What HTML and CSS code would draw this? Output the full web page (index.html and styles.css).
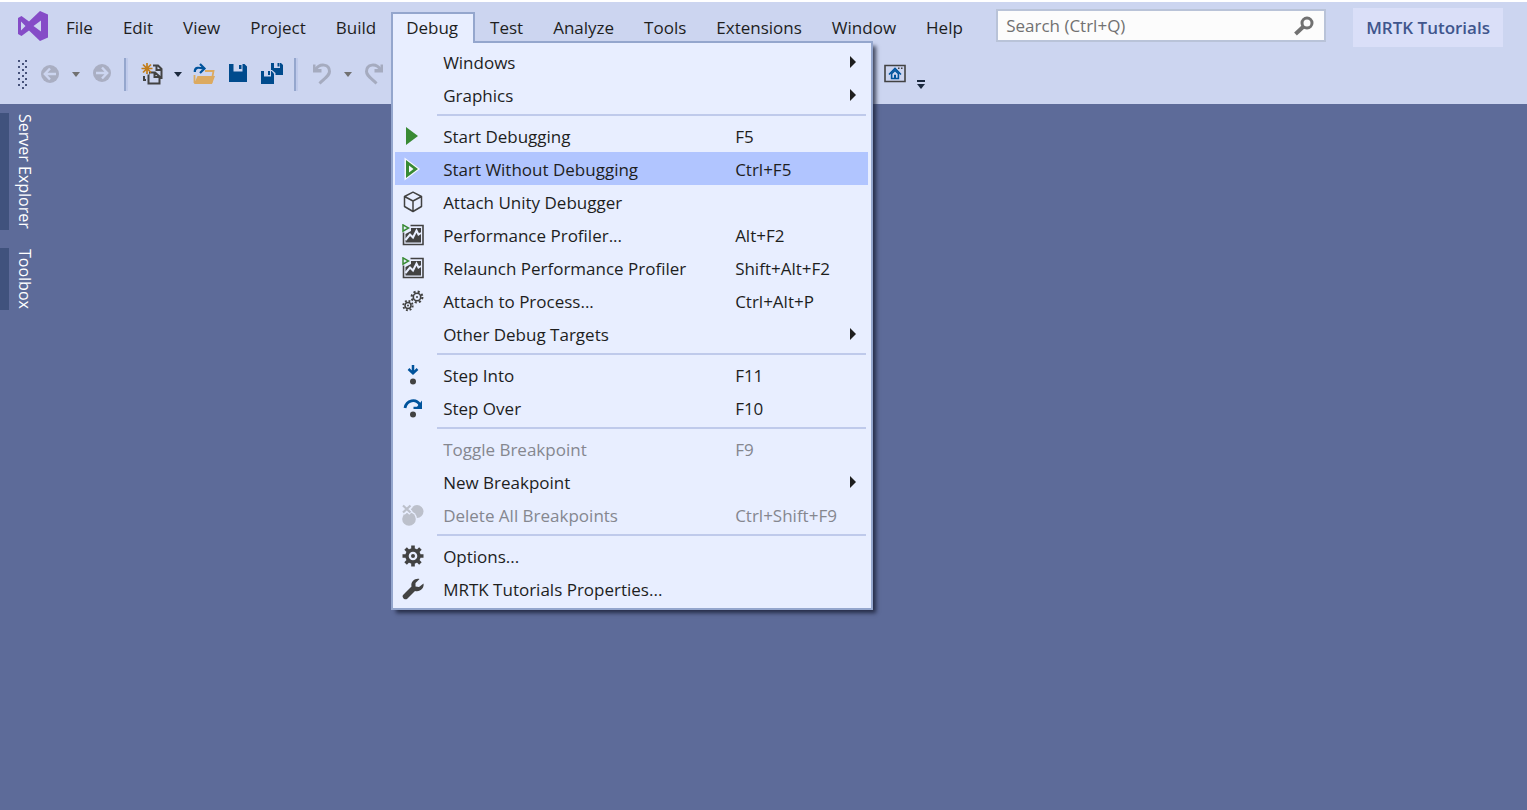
FILE: index.html
```html
<!DOCTYPE html>
<html lang="en">
<head>
<meta charset="utf-8">
<title>MRTK Tutorials</title>
<link rel="stylesheet" href="styles.css">
</head>
<body>
<header class="header">
  <div class="top-row">
    <svg class="logo" viewBox="0 0 30 30" aria-hidden="true"><path fill="#854cc7" fill-rule="evenodd" d="M22 0 30 3.500V26.500L22 30 11 19.500 3.500 25 0 23V7L3.500 5 11 10.500ZM3 10.500V19.500L7.500 15ZM23 9.500 15.500 15 23 20.500Z"/></svg>
    <nav class="menubar" aria-label="Main menu">
      <button class="menu-title">File</button>
      <button class="menu-title">Edit</button>
      <button class="menu-title">View</button>
      <button class="menu-title">Project</button>
      <button class="menu-title">Build</button>
      <div class="menu-host">
        <button class="menu-title open" aria-expanded="true">Debug</button>
        <div class="dropdown" role="menu">
          <button class="item" role="menuitem"><span class="icon"></span><span class="label">Windows</span><kbd></kbd><i class="arrow"></i></button>
          <button class="item" role="menuitem"><span class="icon"></span><span class="label">Graphics</span><kbd></kbd><i class="arrow"></i></button>
          <hr class="rule">
          <button class="item" role="menuitem"><svg class="icon" viewBox="0 0 22 22"><path fill="#388a34" d="M4 2 16 11 4 20Z"/></svg><span class="label">Start Debugging</span><kbd>F5</kbd></button>
          <button class="item selected" role="menuitem"><svg class="icon" viewBox="0 0 22 22"><path fill="#f4f7ff" d="M2.500-.5 18 11 2.500 22.500Z"/><path fill="#388a34" fill-rule="evenodd" d="M4 2 16 11 4 20ZM7 7.500V14.500L11.500 11Z"/></svg><span class="label">Start Without Debugging</span><kbd>Ctrl+F5</kbd></button>
          <button class="item" role="menuitem"><svg class="icon" viewBox="0 0 22 22"><path fill="none" stroke="#424242" stroke-width="1.500" stroke-linejoin="round" d="M11 1.200 19.500 5.500V15.500L11 20.500 2.500 15.500V5.500ZM2.500 5.500 11 10 19.500 5.500M11 10V20.500"/></svg><span class="label">Attach Unity Debugger</span><kbd></kbd></button>
          <button class="item" role="menuitem"><svg class="icon" viewBox="0 0 22 22"><use href="#profiler"/></svg><span class="label">Performance Profiler...</span><kbd>Alt+F2</kbd></button>
          <button class="item" role="menuitem"><svg class="icon" viewBox="0 0 22 22"><use href="#profiler"/></svg><span class="label">Relaunch Performance Profiler</span><kbd>Shift+Alt+F2</kbd></button>
          <button class="item" role="menuitem"><svg class="icon" viewBox="0 0 22 22" fill="none" stroke="#424242"><circle cx="15" cy="7" r="3.700" stroke-width="1.600"/><circle cx="15" cy="7" r="5.400" stroke-width="2.100" stroke-dasharray="2.120 2.120"/><circle cx="15" cy="7" r="1" fill="#424242" stroke="none"/><circle cx="6" cy="15.500" r="3" stroke-width="1.500"/><circle cx="6" cy="15.500" r="4.700" stroke-width="1.900" stroke-dasharray="1.845 1.845"/><circle cx="6" cy="15.500" r="1" fill="#424242" stroke="none"/></svg><span class="label">Attach to Process...</span><kbd>Ctrl+Alt+P</kbd></button>
          <button class="item" role="menuitem"><span class="icon"></span><span class="label">Other Debug Targets</span><kbd></kbd><i class="arrow"></i></button>
          <hr class="rule">
          <button class="item" role="menuitem"><svg class="icon" viewBox="0 0 22 22"><path fill="none" stroke="#00539c" stroke-width="2.500" d="M11 1V9M6.500 5 11 9.300 15.500 5"/><circle cx="11" cy="17.500" r="3" fill="#424242"/></svg><span class="label">Step Into</span><kbd>F11</kbd></button>
          <button class="item" role="menuitem"><svg class="icon" viewBox="0 0 22 22"><path fill="none" stroke="#00539c" stroke-width="2.800" d="M3 11C4.500 3 14 1 18 8"/><path fill="#00539c" d="M20 3.500V12H11.500V9.800H15L18 6Z"/><circle cx="11" cy="17.500" r="3" fill="#424242"/></svg><span class="label">Step Over</span><kbd>F10</kbd></button>
          <hr class="rule">
          <button class="item" role="menuitem" disabled><span class="icon"></span><span class="label">Toggle Breakpoint</span><kbd>F9</kbd></button>
          <button class="item" role="menuitem"><span class="icon"></span><span class="label">New Breakpoint</span><kbd></kbd><i class="arrow"></i></button>
          <button class="item" role="menuitem" disabled><svg class="icon" viewBox="0 0 22 22"><circle cx="15" cy="7.500" r="6.500" fill="#bcc0cb"/><circle cx="7" cy="15" r="8" fill="#e8eeff"/><circle cx="7" cy="15" r="6.800" fill="#bcc0cb"/><path stroke="#e8eeff" stroke-width="5" d="M1 1.500 9 9M9 1.500 1 9"/><path stroke="#bcc0cb" stroke-width="2.200" d="M1 1.500 8.500 8.500M8.500 1.500 1 8.500"/></svg><span class="label">Delete All Breakpoints</span><kbd>Ctrl+Shift+F9</kbd></button>
          <hr class="rule">
          <button class="item" role="menuitem"><svg class="icon" viewBox="0 0 22 22"><g fill="none" stroke="#424242"><circle cx="11" cy="11" r="6" stroke-width="3.400"/><g stroke-width="3.600"><path d="M11 .5V5M11 17V21.500M.5 11H5M17 11H21.500M3.600 3.600 6.500 6.500M15.500 15.500 18.400 18.400M3.600 18.400 6.500 15.500M15.500 6.500 18.400 3.600"/></g></g><circle cx="11" cy="11" r="2" fill="#424242"/></svg><span class="label">Options...</span><kbd></kbd></button>
          <button class="item" role="menuitem"><svg class="icon" viewBox="0 0 22 22"><path fill="#424242" d="M17.500 1C13 0 8.500 3.500 9.500 8.500L1 17C-.5 19 2.500 22.500 5 21L13 13C18 14.500 22.500 10 21.500 5.500L17 9 13.500 8.500 13.500 5Z"/></svg><span class="label">MRTK Tutorials Properties...</span><kbd></kbd></button>
        </div>
      </div>
      <button class="menu-title">Test</button>
      <button class="menu-title">Analyze</button>
      <button class="menu-title">Tools</button>
      <button class="menu-title">Extensions</button>
      <button class="menu-title">Window</button>
      <button class="menu-title">Help</button>
    </nav>
    <label class="search">
      <input class="search-input" type="text" placeholder="Search (Ctrl+Q)" aria-label="Search">
      <svg class="search-icon" viewBox="0 0 20 20" aria-hidden="true"><circle cx="13" cy="7" r="5" fill="none" stroke="#717171" stroke-width="3"/><path stroke="#717171" stroke-width="4" d="M9.500 10.500 1.500 18"/></svg>
    </label>
    <span class="solution">MRTK Tutorials</span>
  </div>
  <div class="toolbar" role="toolbar" aria-label="Standard">
    <span class="grip"></span>
    <button class="tool" aria-label="Back" disabled><svg viewBox="0 0 22 22"><circle cx="11" cy="11" r="9" fill="#a9aec2"/><path fill="none" stroke="#ccd5f0" stroke-width="2.400" d="M17 11H6.500M11 5.500 5.800 11 11 16.500"/></svg></button>
    <button class="caret dim" aria-label="Back history"></button>
    <button class="tool" aria-label="Forward" disabled><svg viewBox="0 0 22 22"><circle cx="11" cy="10" r="9" fill="#a9aec2"/><path fill="none" stroke="#ccd5f0" stroke-width="2.400" d="M5 10H15.500M11 4.500 16.200 10 11 15.500"/></svg></button>
    <span class="divider"></span>
    <button class="tool" aria-label="New project"><svg viewBox="0 0 22 22"><path fill="none" stroke="#424242" stroke-width="2" d="M12 2.500H17L20.500 6V16M15.500 3V7H20M7.500 9.500H14L18.500 13.500V20.500H7.500ZM13.500 10V14H18M5 17H3V13"/><path stroke="#ccd5f0" stroke-width="4" d="M6 0V11.500M.5 5.500H12"/><path stroke="#c27d1a" stroke-width="1.700" d="M6 0V11M.5 5.500H11.500M2 1.500 10 9.500M10 1.500 2 9.500"/></svg></button>
    <button class="caret" aria-label="New project options"></button>
    <button class="tool" aria-label="Open file"><svg viewBox="0 0 22 22"><path fill="none" stroke="#dcaa60" stroke-width="1.800" d="M1.500 12V19H18.500L20.500 8H12"/><path fill="#dcaa60" d="M4.500 13H22L19 21H1Z"/><path fill="none" stroke="#00539c" stroke-width="2.200" d="M1.800 9C1.500 3.500 6 4.500 11 5.500M7 1 11.500 5.500 7 10"/></svg></button>
    <button class="tool" aria-label="Save"><svg viewBox="0 0 22 22"><path fill="#004b8d" fill-rule="evenodd" d="M2 1H17.500L20 3.500V19H2ZM6.500 1V8.500H15.500V1ZM12 2H14.500V6H12Z"/></svg></button>
    <button class="tool" aria-label="Save all"><svg viewBox="0 0 22 22"><path fill="#004b8d" d="M10 0H20L22 2V12H10Z"/><path fill="#ccd5f0" d="M13 0H19V5H13Z"/><path fill="#004b8d" d="M16.500 0H18.500V3.500H16.500Z"/><path fill="#ccd5f0" d="M-1 7H11L14.500 10V22H-1Z"/><path fill="#004b8d" d="M0 8H10.500L13 10.500V21H0Z"/><path fill="#ccd5f0" d="M3 8H10V13.500H3Z"/><path fill="#004b8d" d="M7 8H9V12H7Z"/></svg></button>
    <span class="divider"></span>
    <button class="tool" aria-label="Undo" disabled><svg viewBox="0 0 22 22"><use href="#undo"/></svg></button>
    <button class="caret dim" aria-label="Undo history"></button>
    <button class="tool" aria-label="Redo" disabled><svg viewBox="0 0 22 22"><use href="#undo" transform="translate(22 0) scale(-1 1)"/></svg></button>
    <span class="toolbar-rest"></span>
    <button class="tool" aria-label="Start page"><svg viewBox="0 0 22 22"><path fill="none" stroke="#424242" stroke-width="1.600" d="M1 2.500H21V18.500H1Z"/><path fill="none" stroke="#00539c" stroke-width="1.600" d="M5 11.500 11 5.500 17 11.500"/><path fill="#00539c" fill-rule="evenodd" d="M6.800 10.500 11 6.500 15.200 10.500V16.300H6.800ZM8.400 11V14.800H10V11.800H12V14.800H13.600V11L11 8.500Z"/><path fill="#424242" d="M14 4.500H15.500V6H14ZM17 4.500H18.500V6H17Z"/></svg></button>
    <button class="caret overflow" aria-label="Toolbar options"></button>
  </div>
</header>
<main class="workspace">
  <nav class="side-tabs" aria-label="Tool windows">
    <button class="side-tab">Server Explorer</button>
    <button class="side-tab">Toolbox</button>
  </nav>
</main>
<svg class="symbols" aria-hidden="true">
  <symbol id="profiler" viewBox="0 0 22 22"><path fill="none" stroke="#424242" stroke-width="1.600" d="M8.500 1.500H21V20.500H1.500V8.500"/><path fill="#424242" d="M3.500 18.500V10L9 7V4H19V18.500Z"/><path fill="none" stroke="#e8eeff" stroke-width="2" d="M3.500 16 8 10.500 11 13.500 14.500 6.500 16.500 10.500 19 9"/><path fill="#e8eeff" stroke="#388a34" stroke-width="1.500" d="M1 .8 6.500 4 1 7.200Z"/></symbol>
  <symbol id="undo" viewBox="0 0 22 22"><path fill="none" stroke="#a5abbf" stroke-width="3" d="M4 7C9-.5 18.500 1 18.500 8.500 18.500 12 16 13.500 8.500 20.500"/><path fill="#a5abbf" d="M2 1.500H4.500V6H10.500V9.500H2Z"/></symbol>
</svg>
</body>
</html>
```
FILE: styles.css
```css
* { box-sizing: border-box; }

body {
  margin: 0;
  min-height: 100vh;
  display: flex;
  flex-direction: column;
  background: #5d6b99;
  color: #1e1e1e;
  font-family: "Segoe UI", "Open Sans", "Noto Sans", sans-serif;
  font-size: 17px;
  line-height: 24px;
}

button {
  margin: 0;
  padding: 0;
  border: 0;
  background: none;
  color: inherit;
  font: inherit;
}

.header {
  border-top: 2px solid #fff;
  background: #ccd5f0;
  height: 104px;
}

.top-row {
  display: flex;
  align-items: flex-start;
  padding: 6px 24px 0 18px;
}

.logo {
  width: 30px;
  height: 30px;
  margin: 3px 3px 0 0;
}

.menubar {
  display: flex;
  padding-top: 4px;
}

.menu-title {
  display: block;
  height: 31px;
  padding: 0 15px;
  white-space: nowrap;
}

.menu-host { position: relative; }

.menu-title.open {
  position: relative;
  z-index: 2;
  padding: 0 15px 2px 13px;
  border: 2px solid #94a6cd;
  border-bottom: 0;
  background: #e8eeff;
}

.dropdown {
  position: absolute;
  z-index: 1;
  top: 29px;
  left: 0;
  width: 482px;
  padding: 2px 3px 3px 2px;
  border: 2px solid #94a6cd;
  background: #e8eeff;
  box-shadow: 4px 4px 4px -1px rgba(20, 25, 45, 0.75);
}

.item {
  display: grid;
  grid-template-columns: 22px 266px 1fr 6px;
  align-items: center;
  width: 100%;
  height: 33px;
  padding: 0 12px 0 7px;
  text-align: left;
  white-space: nowrap;
}

.label { padding: 2px 0 0 19px; }
.item kbd { padding: 2px 0 0 45px; font: inherit; }
.item:disabled { color: #85878f; }
.selected { background: #b1c5ff; }

.icon {
  width: 22px;
  height: 22px;
  overflow: visible;
}

.arrow {
  border: 6px solid transparent;
  border-left-color: #1e1e1e;
  border-right: 0;
}

.rule {
  height: 2px;
  margin: 3px 2px 3px 42px;
  border: 0;
  background: #bfcaeb;
}

.search {
  display: flex;
  align-items: center;
  flex: 0 1 330px;
  height: 33px;
  margin: 1px 27px 0 auto;
  padding-right: 10px;
  border: 2px solid #b9c3d8;
  background: #fcfcfc;
}

.search-input {
  flex: 1;
  min-width: 0;
  padding: 1px 8px 0;
  border: 0;
  outline: 0;
  background: none;
  font: inherit;
}

.search-input::placeholder { color: #717171; opacity: 1; }
.search-icon { width: 20px; height: 20px; }

.solution {
  padding: 8px 13px 7px;
  background: #dadff8;
  color: #40568d;
  font-weight: 600;
  white-space: nowrap;
}

.toolbar {
  display: flex;
  align-items: center;
  height: 34px;
  margin-top: 10px;
  padding-left: 18px;
}

.grip {
  width: 9px;
  height: 29px;
  margin-right: 6px;
  background:
    radial-gradient(circle at 1px 1px, #46527a 1px, transparent 1px) 0 0 / 7px 6px,
    radial-gradient(circle at 1px 1px, #46527a 1px, transparent 1px) 4px 3px / 7px 6px;
}

.tool {
  display: grid;
  place-items: center;
  flex: none;
  width: 34px;
  height: 30px;
}

.tool svg { width: 22px; height: 22px; overflow: visible; }

.caret {
  display: grid;
  place-items: center;
  flex: none;
  width: 18px;
  height: 30px;
}

.caret::after {
  content: "";
  border: 4px solid transparent;
  border-top: 5px solid #1b293e;
  border-bottom: 0;
}

.dim::after { border-top-color: #717171; }

.overflow { align-content: end; gap: 2px; }

.overflow::before {
  content: "";
  width: 8px;
  height: 2px;
  background: #1b293e;
}

.divider {
  width: 4px;
  height: 33px;
  margin: 0 7px 0 5px;
  border-left: 2px solid #94a6cd;
  border-right: 2px solid #bfcaeb;
}

.toolbar-rest { flex: 0 1 487px; }

.workspace { flex: 1; padding-top: 9px; }

.side-tabs {
  display: flex;
  flex-direction: column;
  align-items: flex-start;
  gap: 18px;
}

.side-tab {
  padding: 1px 0;
  border-left: 9px solid #40527d;
  color: #fff;
  font-size: 16px;
  writing-mode: vertical-rl;
  line-height: 32px;
}

.symbols { position: absolute; width: 0; height: 0; }
```
